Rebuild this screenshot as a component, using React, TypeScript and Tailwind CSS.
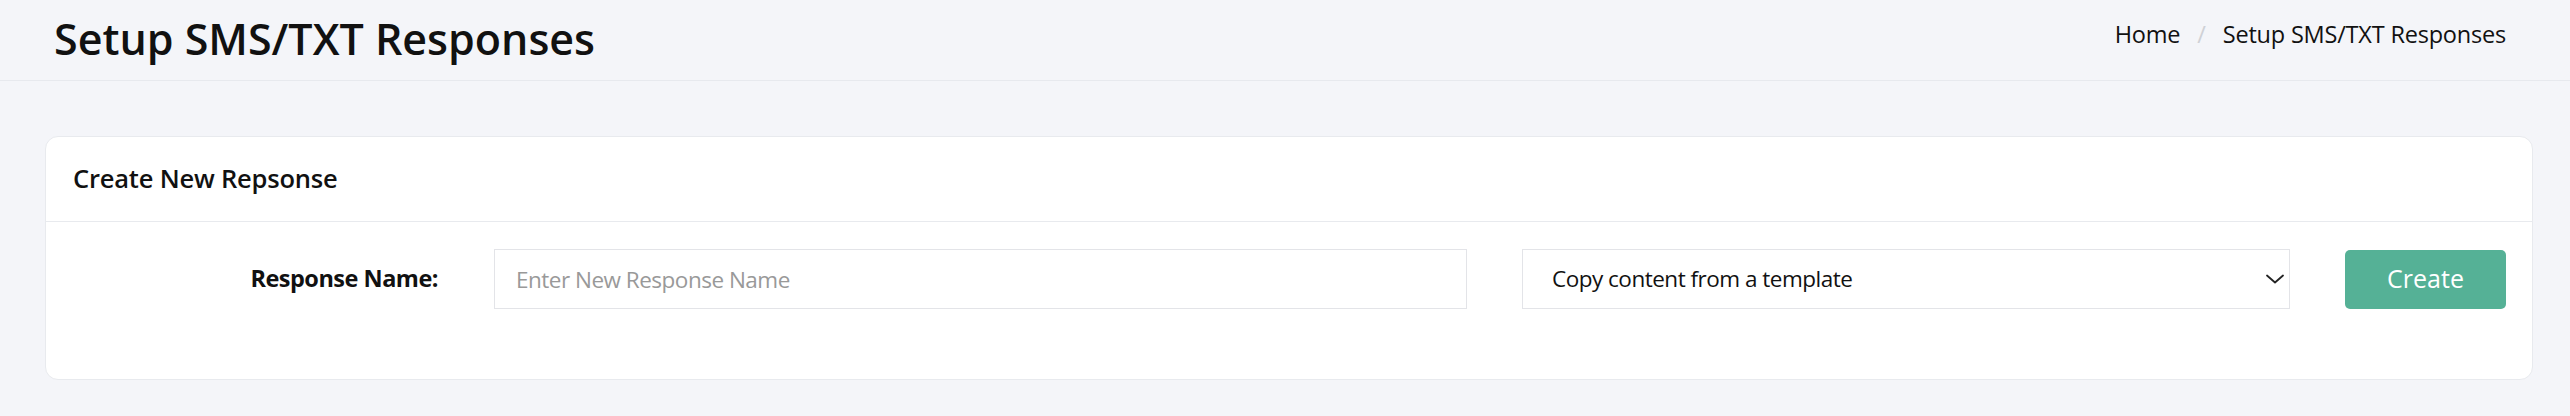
import { ChangeEvent, useState } from 'react';

const templates = ['Copy content from a template', 'Appointment Reminder', 'Follow Up', 'Thank You'];

function Chevron() {
  return (
    <svg width="18" height="10" viewBox="0 0 18 10" fill="none" className="shrink-0">
      <path d="M1 1.5 L9 8.5 L17 1.5" stroke="#222" strokeWidth="1.8" strokeLinecap="round" strokeLinejoin="round" />
    </svg>
  );
}

export default function App() {
  const [name, setName] = useState('');
  const [template, setTemplate] = useState(templates[0]);

  return (
    <div className="min-h-[416px] w-full bg-[#f4f5f9] font-['Open_Sans','Noto_Sans',sans-serif] text-[#111]">
      {/* Page header */}
      <div className="flex h-[81px] items-start justify-between border-b border-[#e7e9ee] pl-[54px] pr-[64px]">
        <h1 className="mt-[7px] text-[43px] font-semibold leading-normal">Setup SMS/TXT Responses</h1>
        <nav className="mt-[17px] flex items-center text-[23.5px] leading-normal tracking-[-0.2px]">
          <a className="cursor-pointer">Home</a>
          <span className="px-[17px] text-[#cfd1d6]">/</span>
          <span>Setup SMS/TXT Responses</span>
        </nav>
      </div>

      {/* Card */}
      <div className="ml-[45px] mr-[37px] mt-[55px] rounded-[13px] border border-[#e8eaee] bg-white">
        <div className="h-[85px] border-b border-[#e8eaee] px-[27px] pt-[22px]">
          <h2 className="text-[25.5px] font-semibold leading-normal tracking-[-0.2px]">Create New Repsonse</h2>
        </div>

        <div className="px-[27px] pb-[70px] pt-[27px]">
          <div className="flex items-center">
            <label className="w-[365px] shrink-0 text-right text-[23.5px] font-bold tracking-[-0.5px]">
              Response Name:
            </label>
            <input
              value={name}
              onChange={(e: ChangeEvent<HTMLInputElement>) => setName(e.target.value)}
              placeholder="Enter New Response Name"
              className="ml-[56px] h-[60px] w-[973px] shrink-0 border border-[#e3e4e8] px-[21px] text-[22.5px] tracking-[-0.5px] text-[#111] outline-none placeholder:text-[#999]"
            />
            <div className="relative ml-[55px] h-[60px] w-[768px] shrink-0">
              <select
                value={template}
                onChange={(e: ChangeEvent<HTMLSelectElement>) => setTemplate(e.target.value)}
                className="h-full w-full appearance-none border border-[#e3e4e8] bg-white pl-[29px] pr-[50px] text-[22.5px] tracking-[-0.5px] text-[#111] outline-none"
              >
                {templates.map((t) => (
                  <option key={t}>{t}</option>
                ))}
              </select>
              <div className="pointer-events-none absolute right-[6px] top-1/2 -translate-y-1/2">
                <Chevron />
              </div>
            </div>
            <button className="ml-[55px] h-[59px] w-[161px] shrink-0 rounded-[5px] bg-[#55b196] text-[25px] text-white">
              Create
            </button>
          </div>
        </div>
      </div>
    </div>
  );
}
